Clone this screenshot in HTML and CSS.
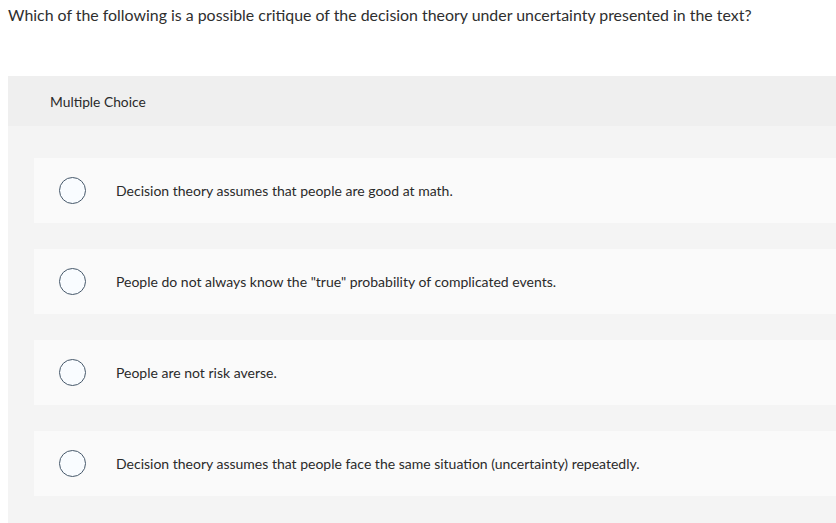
FILE: index.html
```html
<!DOCTYPE html>
<html>
<head>
<meta charset="utf-8">
<link rel="stylesheet" href="styles.css">
</head>
<body>
<p class="question">Which of the following is a possible critique of the decision theory under uncertainty presented in the text?</p>
<div class="panel">
  <div class="panel-header">Multiple Choice</div>
  <div class="options">
    <div class="option"><span class="radio"></span><span class="label">Decision theory assumes that people are good at math.</span></div>
    <div class="option"><span class="radio"></span><span class="label">People do not always know the "true" probability of complicated events.</span></div>
    <div class="option"><span class="radio"></span><span class="label">People are not risk averse.</span></div>
    <div class="option"><span class="radio"></span><span class="label">Decision theory assumes that people face the same situation (uncertainty) repeatedly.</span></div>
  </div>
</div>
</body>
</html>
```
FILE: styles.css
```css
html, body {
  margin: 0;
  padding: 0;
  background: #ffffff;
  font-family: "Lato", "Open Sans", sans-serif;
  color: #2b2b2b;
}
body {
  width: 836px;
  height: 523px;
  overflow: hidden;
}
.question {
  margin: 0;
  padding: 5px 0 0 8px;
  font-size: 15.9px;
  line-height: 20px;
  height: 76px;
  box-sizing: border-box;
  color: #2e2e2e;
}
.panel {
  margin-left: 8px;
  background: #f4f4f4;
  height: 447px;
}
.panel-header {
  height: 50px;
  background: #efefef;
  padding-left: 42px;
  display: flex;
  align-items: center;
  font-size: 13.8px;
  color: #2a2a2a;
}
.options {
  display: flex;
  flex-direction: column;
  gap: 26px;
  padding: 32px 0 0 26px;
}
.option {
  height: 65px;
  background: #fafafa;
  display: flex;
  align-items: center;
  padding-left: 25px;
}
.radio {
  width: 25px;
  height: 25px;
  border: 1.5px solid #46586a;
  border-radius: 50%;
  background: #f9fcff;
  flex: none;
}
.label {
  margin-left: 30px;
  font-size: 14px;
  color: #2a2a2a;
}
```
